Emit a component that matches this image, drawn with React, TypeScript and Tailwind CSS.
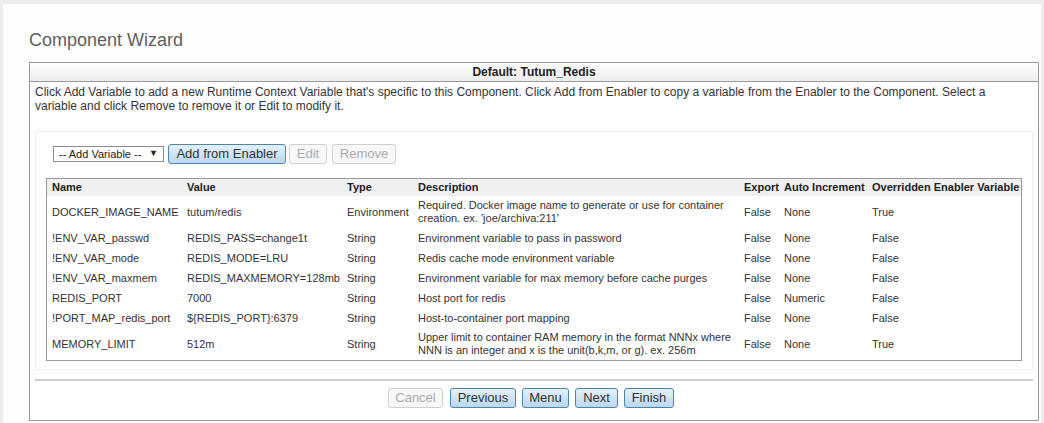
import React from 'react';

const rows = [
  { name: 'DOCKER_IMAGE_NAME', value: 'tutum/redis', type: 'Environment', desc: "Required. Docker image name to generate or use for container creation. ex. 'joe/archiva:211'", exp: 'False', inc: 'None', ovr: 'True', tall: true },
  { name: '!ENV_VAR_passwd', value: 'REDIS_PASS=change1t', type: 'String', desc: 'Environment variable to pass in password', exp: 'False', inc: 'None', ovr: 'False' },
  { name: '!ENV_VAR_mode', value: 'REDIS_MODE=LRU', type: 'String', desc: 'Redis cache mode environment variable', exp: 'False', inc: 'None', ovr: 'False' },
  { name: '!ENV_VAR_maxmem', value: 'REDIS_MAXMEMORY=128mb', type: 'String', desc: 'Environment variable for max memory before cache purges', exp: 'False', inc: 'None', ovr: 'False' },
  { name: 'REDIS_PORT', value: '7000', type: 'String', desc: 'Host port for redis', exp: 'False', inc: 'Numeric', ovr: 'False' },
  { name: '!PORT_MAP_redis_port', value: '${REDIS_PORT}:6379', type: 'String', desc: 'Host-to-container port mapping', exp: 'False', inc: 'None', ovr: 'False' },
  { name: 'MEMORY_LIMIT', value: '512m', type: 'String', desc: 'Upper limit to container RAM memory in the format NNNx where NNN is an integer and x is the unit(b,k,m, or g). ex. 256m', exp: 'False', inc: 'None', ovr: 'True', tall: true },
];

const blueBtn =
  'h-[20px] px-[6px] rounded-[3px] border border-[#4a87b0] bg-gradient-to-b from-[#e4f1fb] to-[#bcd7ef] text-[13px] leading-[18px] text-[#333]';
const greyBtn =
  'h-[20px] px-[6px] rounded-[3px] border border-[#cfcfcf] bg-[#f8f8f8] text-[13px] leading-[18px] text-[#aaa]';

export default function App() {
  return (
    <div className="w-[1044px] h-[423px] bg-[#ededed] pt-[4px] pl-[3px] pr-[3px] overflow-hidden font-['Liberation_Sans',Arial,sans-serif]">
      <div className="h-full bg-[#fdfdfd] pl-[26px] pr-[2px]">
        <h1 className="pt-[25px] h-[58px] text-[18px] leading-[22px] text-[#5f5f5f]">Component Wizard</h1>
        <div className="border border-[#9a9a9a] bg-white h-[359px]">
          <div className="h-[19px] border-b border-[#9a9a9a] bg-gradient-to-b from-[#ffffff] to-[#ececec] text-center text-[12px] leading-[18px] font-bold text-[#222]">
            Default: Tutum_Redis
          </div>
          <p className="pl-[5px] pr-[40px] pt-[3px] text-[12px] leading-[14px] text-[#333]">
            Click Add Variable to add a new Runtime Context Variable that's specific to this Component. Click Add from Enabler to copy a variable from the Enabler to the Component. Select a variable and click Remove to remove it or Edit to modify it.
          </p>
          <div className="mx-[5px] mt-[18px] border border-[#eeeeee] h-[239px] pt-[12px] pl-[10px] pr-[10px]">
            {/* toolbar */}
            <div className="flex items-center gap-[3px] pl-[7px]">
              <div className="w-[111px] h-[16px] border border-[#8d8d8d] bg-white flex items-center justify-between pl-[5px] pr-[5px] text-[11px] text-[#222]">
                <span>-- Add Variable --</span>
                <span className="text-[9px]">▼</span>
              </div>
              <button className={blueBtn + ' ml-[1px] w-[118px]'}>Add from Enabler</button>
              <button className={greyBtn + ' w-[38px]'}>Edit</button>
              <button className={greyBtn + ' ml-[2px] w-[64px]'}>Remove</button>
            </div>
            <div className="mt-[14px] border border-[#9a9a9a] w-[976px] h-[183px]">
              <table className="table-fixed w-[974px] border-collapse text-[11px] text-[#333]">
                <colgroup>
                  <col className="w-[135px]" />
                  <col className="w-[160px]" />
                  <col className="w-[71px]" />
                  <col className="w-[326px]" />
                  <col className="w-[40px]" />
                  <col className="w-[88px]" />
                  <col className="w-[154px]" />
                </colgroup>
                <thead>
                  <tr className="h-[17px] bg-[#f0f0f0] text-[#222]">
                    <th className="text-left pl-[5px] font-bold">Name</th>
                    <th className="text-left pl-[5px] font-bold">Value</th>
                    <th className="text-left pl-[5px] font-bold">Type</th>
                    <th className="text-left pl-[5px] font-bold">Description</th>
                    <th className="text-left pl-[5px] font-bold">Export</th>
                    <th className="text-left pl-[5px] font-bold whitespace-nowrap">Auto Increment</th>
                    <th className="text-left pl-[5px] font-bold whitespace-nowrap">Overridden Enabler Variable</th>
                  </tr>
                </thead>
                <tbody>
                  {rows.map((r) => (
                    <tr key={r.name} className={r.tall ? 'h-[32px]' : 'h-[20px]'}>
                      <td className="pl-[5px] whitespace-nowrap">{r.name}</td>
                      <td className="pl-[5px] whitespace-nowrap">{r.value}</td>
                      <td className="pl-[5px] whitespace-nowrap">{r.type}</td>
                      <td className="pl-[5px] pr-[6px] leading-[13px]">{r.desc}</td>
                      <td className="pl-[5px]">{r.exp}</td>
                      <td className="pl-[5px]">{r.inc}</td>
                      <td className="pl-[5px]">{r.ovr}</td>
                    </tr>
                  ))}
                </tbody>
              </table>
            </div>
          </div>
          <div className="mx-[5px] mt-[9px] h-[2px] bg-[#cccccc]" />
          {/* wizard nav */}
          <div className="flex justify-center gap-[6px] mt-[7px] pr-[6px]">
            <button className={greyBtn + ' w-[55px] mr-[1px]'}>Cancel</button>
            <button className={blueBtn + ' w-[66px]'}>Previous</button>
            <button className={blueBtn + ' w-[47px]'}>Menu</button>
            <button className={blueBtn + ' w-[43px]'}>Next</button>
            <button className={blueBtn + ' w-[50px]'}>Finish</button>
          </div>
        </div>
      </div>
    </div>
  );
}
